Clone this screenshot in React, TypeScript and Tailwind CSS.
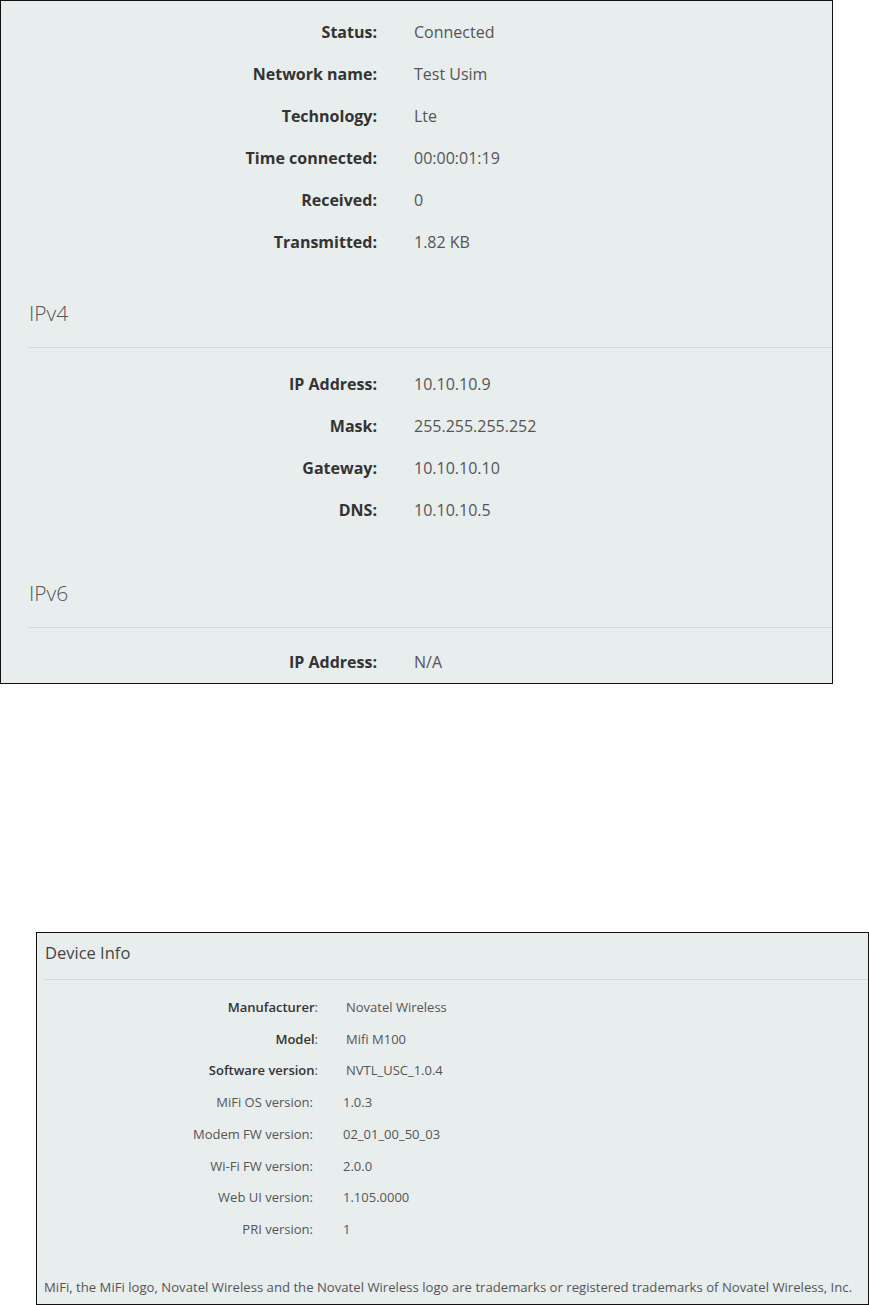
const wan = [
  { label: 'Status:', value: 'Connected' },
  { label: 'Network name:', value: 'Test Usim' },
  { label: 'Technology:', value: 'Lte' },
  { label: 'Time connected:', value: '00:00:01:19' },
  { label: 'Received:', value: '0' },
  { label: 'Transmitted:', value: '1.82 KB' },
];

const ipv4 = [
  { label: 'IP Address:', value: '10.10.10.9' },
  { label: 'Mask:', value: '255.255.255.252' },
  { label: 'Gateway:', value: '10.10.10.10' },
  { label: 'DNS:', value: '10.10.10.5' },
];

const ipv6 = [{ label: 'IP Address:', value: 'N/A' }];

const device = [
  { label: 'Manufacturer', value: 'Novatel Wireless', strong: true },
  { label: 'Model', value: 'Mifi M100', strong: true },
  { label: 'Software version', value: 'NVTL_USC_1.0.4', strong: true },
  { label: 'MiFi OS version:', value: '1.0.3' },
  { label: 'Modem FW version:', value: '02_01_00_50_03' },
  { label: 'Wi-Fi FW version:', value: '2.0.0' },
  { label: 'Web UI version:', value: '1.105.0000' },
  { label: 'PRI version:', value: '1' },
];

function Row({ label, value }: { label: string; value: string }) {
  return (
    <div className="flex h-[42px] items-center text-[16px]">
      <div className="w-[376px] shrink-0 text-right font-bold text-[#333]">{label}</div>
      <div className="pl-[37px] text-[#555]">{value}</div>
    </div>
  );
}

function SectionHead({ title, className }: { title: string; className: string }) {
  return (
    <div className={`ml-[28px] border-b border-[#d3d8d8] pb-[20px] ${className}`}>
      <div className="text-[21px] leading-[28px] font-light text-[#555]">{title}</div>
    </div>
  );
}

export default function App() {
  return (
    <div className="w-[869px] h-[1305px] bg-white font-['Open_Sans',sans-serif] overflow-hidden">
      <div className="w-[833px] h-[684px] border border-[#111] bg-[#e8eded] overflow-hidden pt-[10px]">
        {wan.map((r) => (
          <Row key={r.label} {...r} />
        ))}
        <SectionHead title="IPv4" className="mt-[36px]" />
        <div className="mt-[15px]">
          {ipv4.map((r) => (
            <Row key={r.label} {...r} />
          ))}
        </div>
        <SectionHead title="IPv6" className="mt-[48px]" />
        <div className="mt-[13px]">
          {ipv6.map((r) => (
            <Row key={r.label} {...r} />
          ))}
        </div>
      </div>

      <div className="ml-[36px] mt-[248px] w-[833px] h-[373px] border border-[#111] bg-[#e8eded] overflow-hidden pt-[8px]">
        <div className="ml-[8px] border-b border-[#d3d8d8] pb-[14px]">
          <div className="text-[16.5px] leading-[24px] text-[#444]">Device Info</div>
        </div>
        <div className="mt-[12px] text-[13px]">
          {device.map((r) =>
            r.strong ? (
              <div key={r.label} className="flex h-[31.7px] items-center">
                <div className="w-[281px] shrink-0 text-right text-[#555]">
                  <span className="font-semibold text-[#333]">{r.label}</span>:
                </div>
                <div className="pl-[28px] text-[#555]">{r.value}</div>
              </div>
            ) : (
              <div key={r.label} className="flex h-[31.7px] items-center">
                <div className="w-[276px] shrink-0 text-right text-[#555]">{r.label}</div>
                <div className="pl-[30px] text-[#555]">{r.value}</div>
              </div>
            )
          )}
        </div>
        <div className="mt-[33px] pl-[7px] text-[13.15px] leading-[16px] text-[#555] whitespace-nowrap">
          MiFi, the MiFi logo, Novatel Wireless and the Novatel Wireless logo are trademarks or registered trademarks of Novatel Wireless, Inc.
        </div>
      </div>
    </div>
  );
}
